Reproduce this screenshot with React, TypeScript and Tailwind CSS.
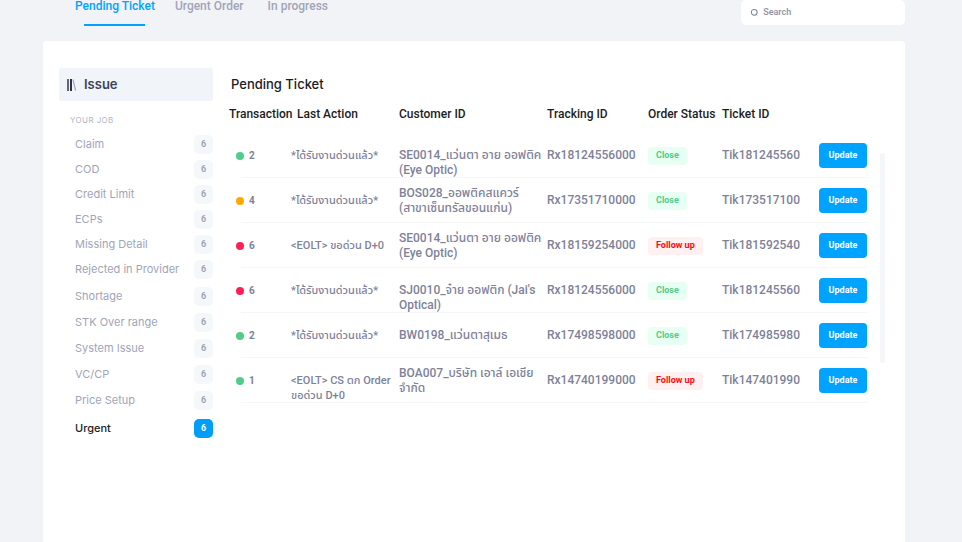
type Status = "Close" | "Follow up";

interface Ticket {
  id: number;
  dot: string;
  count: number;
  action: string;
  customer: string;
  tracking: string;
  status: Status;
  ticket: string;
  actionAlign?: string;
  customerAlign?: string;
}

const GREEN = "bg-[#50cd89]";
const ORANGE = "bg-[#ffa800]";
const RED = "bg-[#ff1f55]";

const tickets: Ticket[] = [
  { id: 1, dot: GREEN, count: 2, action: "*ได้รับงานด่วนแล้ว*", customer: "SE0014_แว่นตา อาย ออฟติค (Eye Optic)", tracking: "Rx18124556000", status: "Close", ticket: "Tik181245560", customerAlign: "align-bottom" },
  { id: 2, dot: ORANGE, count: 4, action: "*ได้รับงานด่วนแล้ว*", customer: "BOS028_ออพติคสแควร์ (สาขาเซ็นทรัลขอนแก่น)", tracking: "Rx17351710000", status: "Close", ticket: "Tik173517100" },
  { id: 3, dot: RED, count: 6, action: "<EOLT> ขอด่วน D+0", customer: "SE0014_แว่นตา อาย ออฟติค (Eye Optic)", tracking: "Rx18159254000", status: "Follow up", ticket: "Tik181592540" },
  { id: 4, dot: RED, count: 6, action: "*ได้รับงานด่วนแล้ว*", customer: "SJ0010_จ๋าย ออฟติก (Jai's Optical)", tracking: "Rx18124556000", status: "Close", ticket: "Tik181245560", customerAlign: "align-bottom" },
  { id: 5, dot: GREEN, count: 2, action: "*ได้รับงานด่วนแล้ว*", customer: "BW0198_แว่นตาสุเมธ", tracking: "Rx17498598000", status: "Close", ticket: "Tik174985980" },
  { id: 6, dot: GREEN, count: 1, action: "<EOLT> CS ตก Order ขอด่วน D+0", customer: "BOA007_บริษัท เอาล์ เอเชีย จำกัด", tracking: "Rx14740199000", status: "Follow up", ticket: "Tik147401990", actionAlign: "align-bottom" },
];

const shortJobs = ["Claim", "COD", "Credit Limit", "ECPs", "Missing Detail", "Rejected in Provider"];
const moreJobs = ["Shortage", "STK Over range", "System Issue", "VC/CP", "Price Setup"];

function Job({ name, height, active = false }: { name: string; height: string; active?: boolean }) {
  return (
    <li>
      <button
        type="button"
        className={`flex w-full items-center justify-between pl-4 font-['Inter',sans-serif] text-[11px] ${height} ${active ? "font-medium text-[#1c1c22]" : "text-[#a1a5b7]"}`}
      >
        <span>{name}</span>
        <span
          className={`flex size-[19px] items-center justify-center rounded-[5px] pt-px font-['Roboto',sans-serif] text-[9px] font-bold ${active ? "bg-[#009ef7] text-white" : "bg-[#f5f8fa] text-[#a1a5b7]"}`}
        >
          6
        </span>
      </button>
    </li>
  );
}

function StatusChip({ status }: { status: Status }) {
  return (
    <span
      className={`flex h-[18px] w-fit items-center rounded px-2 text-[9px] font-bold whitespace-nowrap ${status === "Close" ? "bg-[#e8fff3] text-[#50cd89]" : "bg-[#fff0f1] text-[#fb0a12]"}`}
    >
      {status}
    </span>
  );
}

export default function App() {
  return (
    <div className="flex min-h-screen flex-col bg-[#f1f3f7] pr-[57px] pl-[43px] font-['Roboto','Noto_Sans_Thai','Noto_Sans',sans-serif]">
      <header className="flex h-[41px] items-start justify-between">
        <nav className="flex pl-8 text-xs leading-3 font-medium text-[#a1a5b7]">
          <button type="button" className="flex flex-col items-center gap-3 text-[#00a3ff]">
            Pending Ticket
            <span className="h-[2px] w-[61px] bg-[#00a3ff]" />
          </button>
          <button type="button" className="ml-5 self-start">Urgent Order</button>
          <button type="button" className="ml-6 self-start">In progress</button>
        </nav>
        <label className="flex h-[25px] w-[164px] items-center gap-1 rounded-[5px] bg-white pl-[9px] text-[#7e8299]">
          <svg className="size-[10px]" viewBox="0 0 10 10" fill="none" stroke="currentColor" aria-hidden="true">
            <circle cx="4.6" cy="4.3" r="3.2" strokeWidth="1.1" />
            <path d="M7.2 7.2 8.2 8.2" strokeWidth="0.4" strokeLinecap="round" />
          </svg>
          <input
            type="search"
            aria-label="Search"
            placeholder="Search"
            className="w-full min-w-0 bg-transparent text-[9px] font-semibold outline-none placeholder:text-[#9396ab]"
          />
        </label>
      </header>

      <main className="flex flex-1 items-start rounded-t bg-white pt-[27px] pr-5 pl-4">
        <aside className="w-[154px] shrink-0">
          <h2 className="flex h-[33px] items-center gap-[7px] rounded-xs bg-[#f1f5f9] pl-2 font-['Inter',sans-serif] text-[13px] font-semibold text-[#3f4254]">
            <svg className="h-3 w-[10px]" viewBox="0 0 10 12" fill="none" aria-hidden="true">
              <path d="M1 0v12" stroke="#3f4254" strokeWidth="1.6" />
              <path d="M4 0v12" stroke="#181c32" strokeWidth="1.8" />
              <path d="M6 0.5 8.6 11.5" stroke="#a1a5b7" strokeWidth="1.1" />
            </svg>
            Issue
          </h2>
          <h3 className="flex h-[31px] items-center pt-[6px] pl-[11px] font-['Inter',sans-serif] text-[8px] tracking-wider text-[#b5b5c3]">
            YOUR JOB
          </h3>
          <ul>
            {shortJobs.map((name) => (
              <Job key={name} name={name} height="h-[25px]" />
            ))}
          </ul>
          <ul className="mt-px">
            {moreJobs.map((name) => (
              <Job key={name} name={name} height="h-[26px]" />
            ))}
            <Job name="Urgent" height="h-[30px]" active />
          </ul>
        </aside>

        <section className="ml-4 min-w-0 flex-1">
          <h1 className="flex h-[33px] items-center pl-[2px] font-['Inter',sans-serif] text-[13px] font-medium text-[#1c1c22]">
            Pending Ticket
          </h1>
          <div className="flex items-start">
            <table className="w-full table-fixed text-left text-xs leading-[15px] font-medium text-[#7e8299]">
              <colgroup>
                <col className="w-[62px]" />
                <col className="w-[108px]" />
                <col />
                <col className="w-[101px]" />
                <col className="w-[74px]" />
                <col className="w-[97px]" />
                <col className="w-[48px]" />
              </colgroup>
              <thead className="whitespace-nowrap text-[#1c1c22]">
                <tr className="h-8 align-top">
                  <th className="pt-[6px] font-medium">Transaction</th>
                  <th className="pt-[6px] pl-[6px] font-medium">Last Action</th>
                  <th className="pt-[6px] font-medium">Customer ID</th>
                  <th className="pt-[6px] font-medium">Tracking ID</th>
                  <th className="pt-[6px] font-medium">Order Status</th>
                  <th className="pt-[6px] font-medium">Ticket ID</th>
                  <th aria-label="Actions" />
                </tr>
              </thead>
              <tbody>
                {tickets.map((t) => (
                  <tr
                    key={t.id}
                    className="h-[45px] *:relative *:after:absolute *:after:inset-x-0 *:after:bottom-0 *:after:h-px *:after:bg-[#f5f6f8]"
                  >
                    <td className="after:left-3!">
                      <span className="flex items-center gap-[5px] pl-[7px] text-[10px] font-bold">
                        <span className={`size-2 rounded-full ${t.dot}`} />
                        {t.count}
                      </span>
                    </td>
                    <td className={`text-[11px] ${t.actionAlign ?? ""}`}>{t.action}</td>
                    <td className={t.customerAlign}>
                      <p className="max-w-[144px]">{t.customer}</p>
                    </td>
                    <td>{t.tracking}</td>
                    <td>
                      <StatusChip status={t.status} />
                    </td>
                    <td>{t.ticket}</td>
                    <td>
                      <button
                        type="button"
                        className="block h-[25px] w-12 rounded bg-[#00a3ff] text-[9px] font-bold text-white"
                      >
                        Update
                      </button>
                    </td>
                  </tr>
                ))}
              </tbody>
            </table>
            <div className="mt-[52px] ml-[13px] h-[210px] w-[5px] shrink-0 rounded-sm bg-[#f5f6f8]" />
          </div>
        </section>
      </main>
    </div>
  );
}
